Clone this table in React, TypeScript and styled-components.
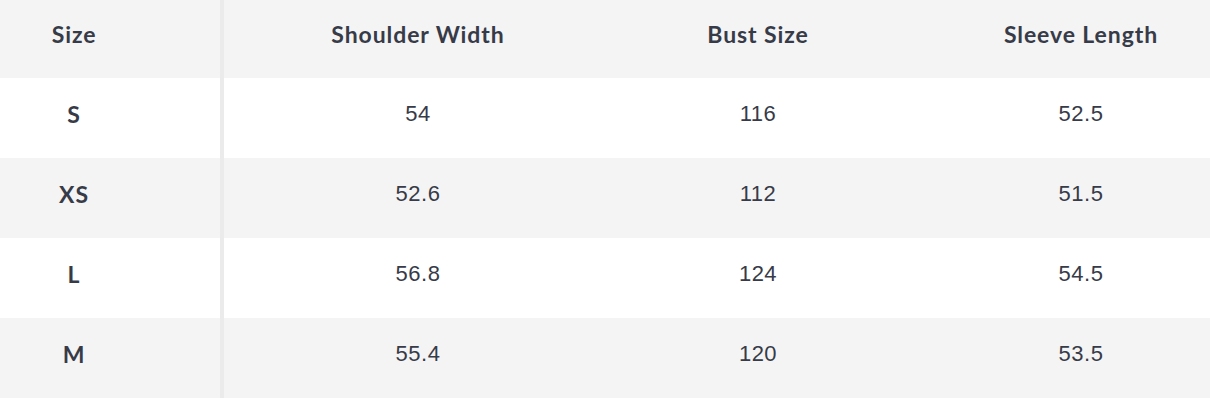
import React from "react";
import styled, { createGlobalStyle } from "styled-components";

const GlobalStyle = createGlobalStyle`
  body {
    margin: 0;
    background: #ffffff;
    font-family: "Liberation Sans", Arial, sans-serif;
  }
`;

const columns = ["Shoulder Width", "Bust Size", "Sleeve Length"];

const rows = [
  { size: "S", values: ["54", "116", "52.5"] },
  { size: "XS", values: ["52.6", "112", "51.5"] },
  { size: "L", values: ["56.8", "124", "54.5"] },
  { size: "M", values: ["55.4", "120", "53.5"] },
];

function App() {
  return (
    <>
      <GlobalStyle />
      <TableWrap>
        <Row $height={78} $shade $lift={10}>
          <SizeCell>
            <HeadText>Size</HeadText>
          </SizeCell>
          <Divider />
          {columns.map((c) => (
            <Cell key={c}>
              <HeadText>{c}</HeadText>
            </Cell>
          ))}
        </Row>
        {rows.map((r, i) => (
          <Row key={r.size} $height={80} $shade={i % 2 === 1} $lift={8}>
            <SizeCell>
              <HeadText>{r.size}</HeadText>
            </SizeCell>
            <Divider />
            {r.values.map((v, j) => (
              <Cell key={j}>
                <ValueText>{v}</ValueText>
              </Cell>
            ))}
          </Row>
        ))}
      </TableWrap>
    </>
  );
}

export default App;

const TableWrap = styled.div`
  width: 1210px;
  height: 400px;
  overflow: hidden;
  display: flex;
  flex-direction: column;
`;

const Row = styled.div<{ $height: number; $shade?: boolean; $lift: number }>`
  display: grid;
  grid-template-columns: 220px 4px 388px 292px 354px;
  height: ${(p) => p.$height}px;
  background: ${(p) => (p.$shade ? "#f4f4f4" : "#ffffff")};
  flex-shrink: 0;

  & > div:not(:nth-child(2)) {
    padding-bottom: ${(p) => p.$lift}px;
  }
`;

const SizeCell = styled.div`
  display: flex;
  align-items: center;
  justify-content: center;
  padding-right: 72px;
`;

const Cell = styled.div`
  display: flex;
  align-items: center;
  justify-content: center;
`;

const Divider = styled.div`
  background: #ebebeb;
`;

const HeadText = styled.span`
  font-family: Lato, "Noto Sans", sans-serif;
  font-weight: 700;
  font-size: 23px;
  letter-spacing: 0.9px;
  color: #373b48;
  white-space: nowrap;
`;

const ValueText = styled.span`
  font-family: "Liberation Sans", Arial, sans-serif;
  font-size: 22px;
  letter-spacing: 0.5px;
  color: #373b48;
  white-space: nowrap;
`;
